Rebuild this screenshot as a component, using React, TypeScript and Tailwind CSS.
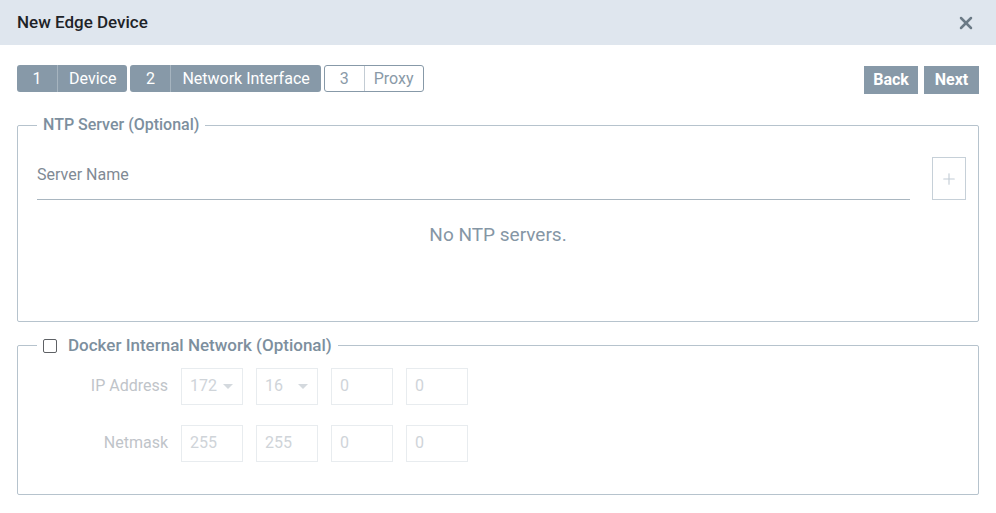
import { X, Plus } from 'lucide-react'

const STEPS = [
  { num: '1', label: 'Device', done: true },
  { num: '2', label: 'Network Interface', done: true },
  { num: '3', label: 'Proxy', done: false },
]

function Step({ num, label, done }: { num: string; label: string; done: boolean }) {
  return (
    <div
      className={
        done
          ? 'flex h-[27px] items-stretch rounded-[3px] bg-[#8799a8] text-white'
          : 'flex h-[27px] items-stretch rounded-[3px] border border-[#8799a8] bg-white text-[#8a9aa8]'
      }
    >
      <span
        className={
          done
            ? 'flex w-[41px] items-center justify-center border-r border-[#a6b4bf]'
            : 'flex w-[40px] items-center justify-center border-r border-[#c3ccd4]'
        }
      >
        {num}
      </span>
      <span className={done ? 'flex items-center px-[11px]' : 'flex items-center px-[9px]'}>{label}</span>
    </div>
  )
}

function OctetBox({ value, select }: { value: string; select?: boolean }) {
  return (
    <div className="flex h-[37px] w-[62px] items-center justify-between border border-[#e8ecef] pl-[8px] pr-[9px] text-[#cfd4d9]">
      <span>{value}</span>
      {select && (
        <span className="h-0 w-0 border-x-[5px] border-t-[5px] border-x-transparent border-t-[#d4d9de]" />
      )}
    </div>
  )
}

function OctetRow({ label, values, selects }: { label: string; values: string[]; selects: number }) {
  return (
    <div className="flex items-center">
      <span className="w-[163px] pr-[13px] text-right text-[#bfc4c9]">{label}</span>
      <div className="flex gap-[13px]">
        {values.map((v, i) => (
          <OctetBox key={i} value={v} select={i < selects} />
        ))}
      </div>
    </div>
  )
}

export default function App() {
  return (
    <div className="h-[513px] w-[996px] bg-white font-['Roboto',sans-serif] text-[16px]">
      <div className="flex h-[45px] items-center justify-between bg-[#dfe6ee] pl-[17px] pr-[20px]">
        <h1 className="text-[17px] font-medium text-[#1e2328]">New Edge Device</h1>
        <X className="h-[20px] w-[20px] text-[#6b7a86]" strokeWidth={3} />
      </div>

      <div className="px-[17px] pt-[20px]">
        <div className="flex items-start justify-between">
          <div className="flex gap-[3px]">
            {STEPS.map((s) => (
              <Step key={s.num} {...s} />
            ))}
          </div>
          <div className="flex gap-[6px] pt-[1px]">
            <button className="h-[28px] w-[54px] bg-[#8799a8] font-bold text-white">Back</button>
            <button className="h-[28px] w-[55px] bg-[#8799a8] font-bold text-white">Next</button>
          </div>
        </div>

        <fieldset className="mt-[19px] h-[209px] rounded-[2px] border border-[#b6c3cd] pl-[19px] pr-[12px]">
          <legend className="px-[6px] font-medium text-[#7d8f9e]">NTP Server (Optional)</legend>
          <div className="mt-[20px] flex items-end gap-[22px]">
            <div className="flex h-[43px] flex-1 items-end border-b border-[#a9b6c0] pb-[12px] text-[#7f8a94]">
              Server Name
            </div>
            <button className="flex h-[43px] w-[34px] items-center justify-center border border-[#c6d0d8] text-[#c2ccd5]">
              <Plus className="h-[18px] w-[18px]" strokeWidth={1.5} />
            </button>
          </div>
          <p className="mt-[21px] pr-[7px] text-center text-[19px] text-[#8596a5]">No NTP servers.</p>
        </fieldset>

        <fieldset className="mt-[11px] h-[162px] rounded-[2px] border border-[#b6c3cd]">
          <legend className="ml-[19px] flex items-center gap-[11px] px-[6px] text-[17px] font-medium text-[#7d8f9e]">
            <span className="h-[14px] w-[14px] rounded-[2px] border border-[#5e6165] bg-white" />
            <span>Docker Internal Network (Optional)</span>
          </legend>
          <div className="mt-[9px] flex flex-col gap-[20px]">
            <OctetRow label="IP Address" values={['172', '16', '0', '0']} selects={2} />
            <OctetRow label="Netmask" values={['255', '255', '0', '0']} selects={0} />
          </div>
        </fieldset>
      </div>
    </div>
  )
}
